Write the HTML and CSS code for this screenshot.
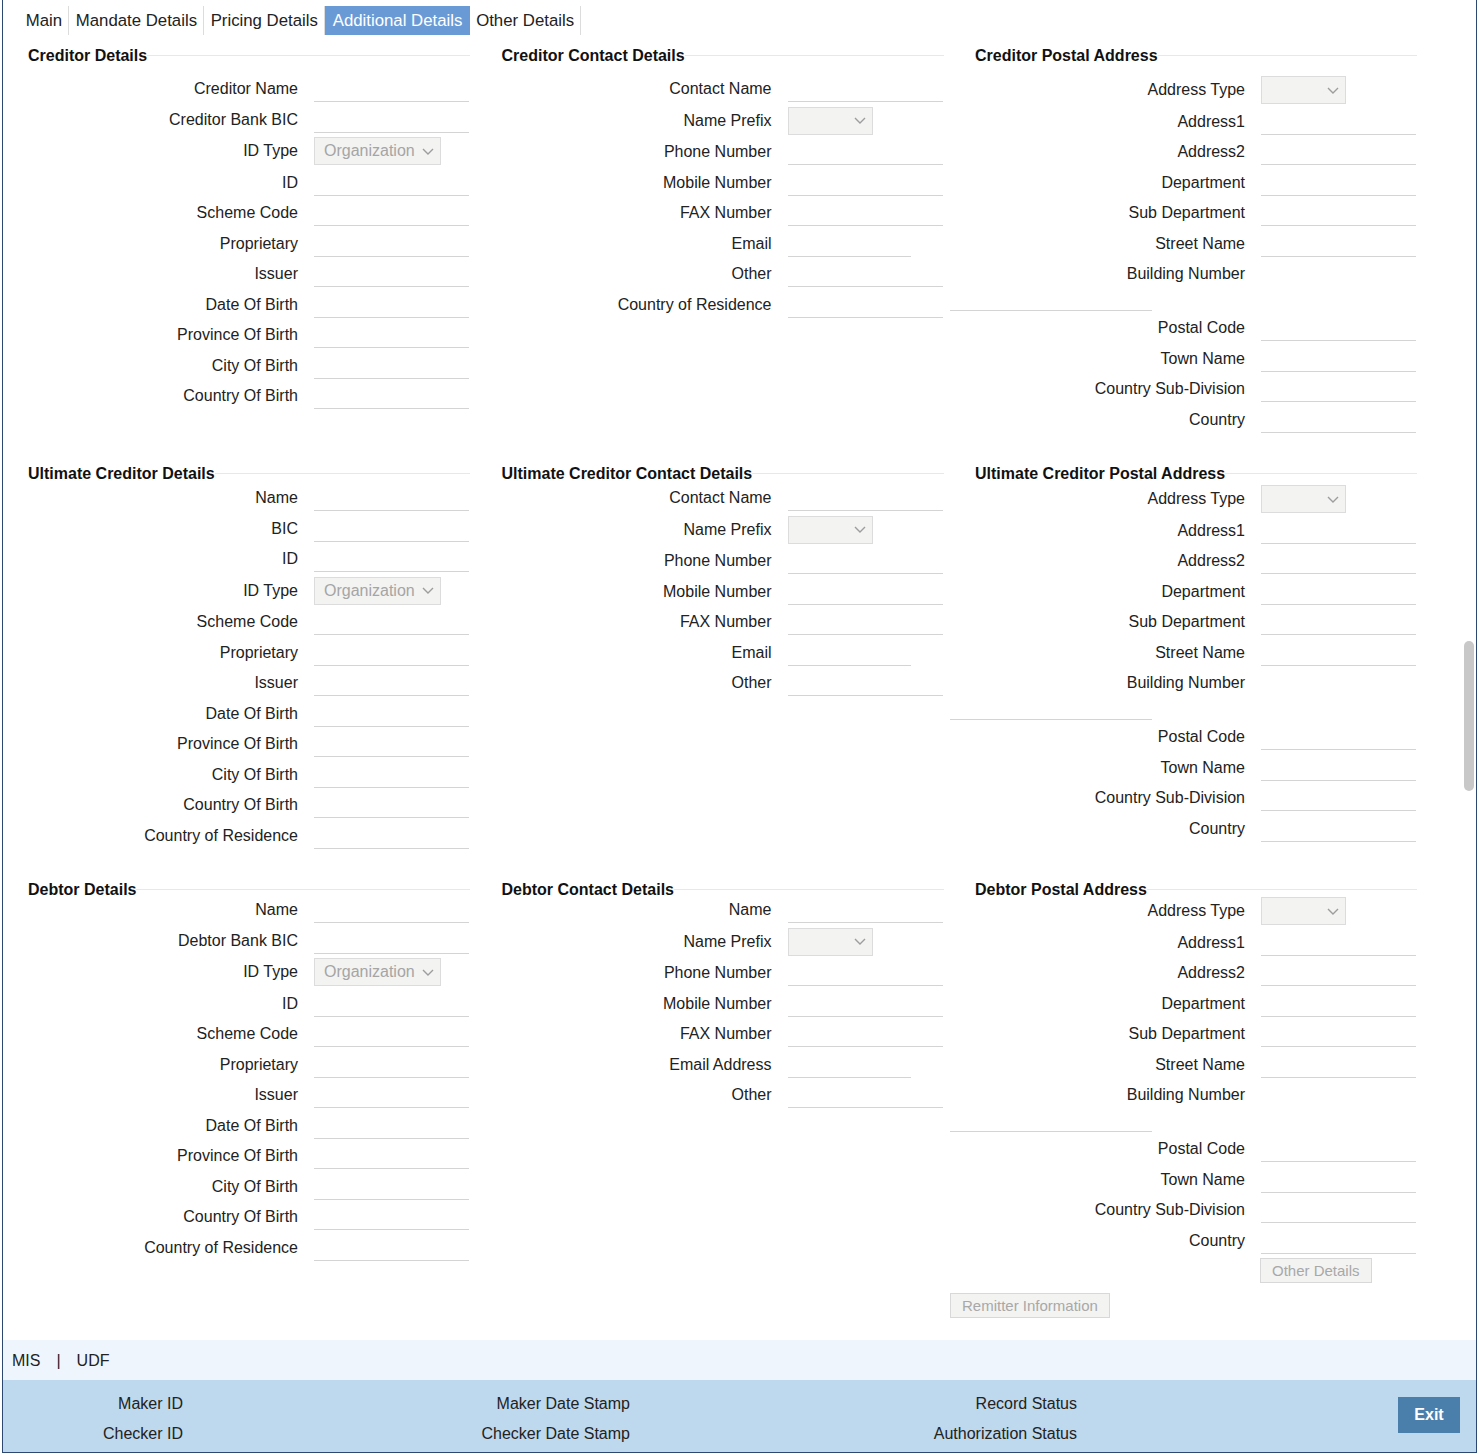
FILE: index.html
```html
<!DOCTYPE html>
<html lang="en">
<head>
  <meta charset="UTF-8" />
  <title>Additional Details</title>
  <link rel="stylesheet" href="styles.css">
</head>
<body>
  <div class="window">
    <ul class="tabs">
      <li>Main</li>
      <li>Mandate Details</li>
      <li>Pricing Details</li>
      <li class="active">Additional Details</li>
      <li>Other Details</li>
    </ul>

    <div class="content">
      <!-- creditor -->
      <div class="section first">
        <div class="col">
          <div class="col-head"><span>Creditor Details</span></div>
          <div class="row"><label>Creditor Name</label><input class="fld"></div>
          <div class="row"><label>Creditor Bank BIC</label><input class="fld"></div>
          <div class="row sel"><label>ID Type</label><div class="sel-box org"><span>Organization</span><svg width="12" height="7" viewBox="0 0 12 7"><path d="M1 1l5 5 5-5"/></svg></div></div>
          <div class="row"><label>ID</label><input class="fld"></div>
          <div class="row"><label>Scheme Code</label><input class="fld"></div>
          <div class="row"><label>Proprietary</label><input class="fld"></div>
          <div class="row"><label>Issuer</label><input class="fld"></div>
          <div class="row"><label>Date Of Birth</label><input class="fld"></div>
          <div class="row"><label>Province Of Birth</label><input class="fld"></div>
          <div class="row"><label>City Of Birth</label><input class="fld"></div>
          <div class="row"><label>Country Of Birth</label><input class="fld"></div>
        </div>
        <div class="col">
          <div class="col-head"><span>Creditor Contact Details</span></div>
          <div class="row"><label>Contact Name</label><input class="fld"></div>
          <div class="row sel"><label>Name Prefix</label><div class="sel-box"><span></span><svg width="12" height="7" viewBox="0 0 12 7"><path d="M1 1l5 5 5-5"/></svg></div></div>
          <div class="row"><label>Phone Number</label><input class="fld"></div>
          <div class="row"><label>Mobile Number</label><input class="fld"></div>
          <div class="row"><label>FAX Number</label><input class="fld"></div>
          <div class="row"><label>Email</label><input class="fld short"></div>
          <div class="row"><label>Other</label><input class="fld"></div>
          <div class="row"><label>Country of Residence</label><input class="fld"></div>
        </div>
        <div class="col">
          <div class="col-head"><span>Creditor Postal Address</span></div>
          <div class="row sel"><label>Address Type</label><div class="sel-box"><span></span><svg width="12" height="7" viewBox="0 0 12 7"><path d="M1 1l5 5 5-5"/></svg></div></div>
          <div class="row"><label>Address1</label><input class="fld"></div>
          <div class="row"><label>Address2</label><input class="fld"></div>
          <div class="row"><label>Department</label><input class="fld"></div>
          <div class="row"><label>Sub Department</label><input class="fld"></div>
          <div class="row"><label>Street Name</label><input class="fld"></div>
          <div class="row"><label>Building Number</label></div>
          <div class="row wrap"><input class="fld wide"></div>
          <div class="row"><label>Postal Code</label><input class="fld"></div>
          <div class="row"><label>Town Name</label><input class="fld"></div>
          <div class="row"><label>Country Sub-Division</label><input class="fld"></div>
          <div class="row"><label>Country</label><input class="fld"></div>
        </div>
      </div>

      <!-- ultimate creditor -->
      <div class="section second">
        <div class="col">
          <div class="col-head"><span>Ultimate Creditor Details</span></div>
          <div class="row"><label>Name</label><input class="fld"></div>
          <div class="row"><label>BIC</label><input class="fld"></div>
          <div class="row"><label>ID</label><input class="fld"></div>
          <div class="row sel"><label>ID Type</label><div class="sel-box org"><span>Organization</span><svg width="12" height="7" viewBox="0 0 12 7"><path d="M1 1l5 5 5-5"/></svg></div></div>
          <div class="row"><label>Scheme Code</label><input class="fld"></div>
          <div class="row"><label>Proprietary</label><input class="fld"></div>
          <div class="row"><label>Issuer</label><input class="fld"></div>
          <div class="row"><label>Date Of Birth</label><input class="fld"></div>
          <div class="row"><label>Province Of Birth</label><input class="fld"></div>
          <div class="row"><label>City Of Birth</label><input class="fld"></div>
          <div class="row"><label>Country Of Birth</label><input class="fld"></div>
          <div class="row"><label>Country of Residence</label><input class="fld"></div>
        </div>
        <div class="col">
          <div class="col-head"><span>Ultimate Creditor Contact Details</span></div>
          <div class="row"><label>Contact Name</label><input class="fld"></div>
          <div class="row sel"><label>Name Prefix</label><div class="sel-box"><span></span><svg width="12" height="7" viewBox="0 0 12 7"><path d="M1 1l5 5 5-5"/></svg></div></div>
          <div class="row"><label>Phone Number</label><input class="fld"></div>
          <div class="row"><label>Mobile Number</label><input class="fld"></div>
          <div class="row"><label>FAX Number</label><input class="fld"></div>
          <div class="row"><label>Email</label><input class="fld short"></div>
          <div class="row"><label>Other</label><input class="fld"></div>
        </div>
        <div class="col">
          <div class="col-head"><span>Ultimate Creditor Postal Address</span></div>
          <div class="row sel"><label>Address Type</label><div class="sel-box"><span></span><svg width="12" height="7" viewBox="0 0 12 7"><path d="M1 1l5 5 5-5"/></svg></div></div>
          <div class="row"><label>Address1</label><input class="fld"></div>
          <div class="row"><label>Address2</label><input class="fld"></div>
          <div class="row"><label>Department</label><input class="fld"></div>
          <div class="row"><label>Sub Department</label><input class="fld"></div>
          <div class="row"><label>Street Name</label><input class="fld"></div>
          <div class="row"><label>Building Number</label></div>
          <div class="row wrap"><input class="fld wide"></div>
          <div class="row"><label>Postal Code</label><input class="fld"></div>
          <div class="row"><label>Town Name</label><input class="fld"></div>
          <div class="row"><label>Country Sub-Division</label><input class="fld"></div>
          <div class="row"><label>Country</label><input class="fld"></div>
        </div>
      </div>

      <!-- debtor -->
      <div class="section third">
        <div class="col">
          <div class="col-head"><span>Debtor Details</span></div>
          <div class="row"><label>Name</label><input class="fld"></div>
          <div class="row"><label>Debtor Bank BIC</label><input class="fld"></div>
          <div class="row sel"><label>ID Type</label><div class="sel-box org"><span>Organization</span><svg width="12" height="7" viewBox="0 0 12 7"><path d="M1 1l5 5 5-5"/></svg></div></div>
          <div class="row"><label>ID</label><input class="fld"></div>
          <div class="row"><label>Scheme Code</label><input class="fld"></div>
          <div class="row"><label>Proprietary</label><input class="fld"></div>
          <div class="row"><label>Issuer</label><input class="fld"></div>
          <div class="row"><label>Date Of Birth</label><input class="fld"></div>
          <div class="row"><label>Province Of Birth</label><input class="fld"></div>
          <div class="row"><label>City Of Birth</label><input class="fld"></div>
          <div class="row"><label>Country Of Birth</label><input class="fld"></div>
          <div class="row"><label>Country of Residence</label><input class="fld"></div>
        </div>
        <div class="col">
          <div class="col-head"><span>Debtor Contact Details</span></div>
          <div class="row"><label>Name</label><input class="fld"></div>
          <div class="row sel"><label>Name Prefix</label><div class="sel-box"><span></span><svg width="12" height="7" viewBox="0 0 12 7"><path d="M1 1l5 5 5-5"/></svg></div></div>
          <div class="row"><label>Phone Number</label><input class="fld"></div>
          <div class="row"><label>Mobile Number</label><input class="fld"></div>
          <div class="row"><label>FAX Number</label><input class="fld"></div>
          <div class="row"><label>Email Address</label><input class="fld short"></div>
          <div class="row"><label>Other</label><input class="fld"></div>
        </div>
        <div class="col">
          <div class="col-head"><span>Debtor Postal Address</span></div>
          <div class="row sel"><label>Address Type</label><div class="sel-box"><span></span><svg width="12" height="7" viewBox="0 0 12 7"><path d="M1 1l5 5 5-5"/></svg></div></div>
          <div class="row"><label>Address1</label><input class="fld"></div>
          <div class="row"><label>Address2</label><input class="fld"></div>
          <div class="row"><label>Department</label><input class="fld"></div>
          <div class="row"><label>Sub Department</label><input class="fld"></div>
          <div class="row"><label>Street Name</label><input class="fld"></div>
          <div class="row"><label>Building Number</label></div>
          <div class="row wrap"><input class="fld wide"></div>
          <div class="row"><label>Postal Code</label><input class="fld"></div>
          <div class="row"><label>Town Name</label><input class="fld"></div>
          <div class="row"><label>Country Sub-Division</label><input class="fld"></div>
          <div class="row"><label>Country</label><input class="fld"></div>
          <div class="btn-row"><button class="btn" disabled>Other Details</button></div>
          <div class="btn-row remit"><button class="btn" disabled>Remitter Information</button></div>
        </div>
      </div>
    </div>

    <div class="mis">
      <span>MIS</span><span class="sep">|</span><span>UDF</span>
    </div>

    <div class="footer">
      <div class="stamps">
        <span>Maker ID</span>
        <span>Maker Date Stamp</span>
        <span>Record Status</span>
        <span>Checker ID</span>
        <span>Checker Date Stamp</span>
        <span>Authorization Status</span>
      </div>
      <button class="exit">Exit</button>
    </div>

    <div class="scroll-thumb"></div>
  </div>
</body>
</html>
```

FILE: styles.css
```css
body {
  margin: 0;
  font-family: "Liberation Sans", Arial, sans-serif;
  font-size: 16px;
  color: #222;
  background: #fff;
}
.window {
  position: relative;
  margin-left: 2px;
  width: 1475px;
  height: 1453px;
  box-sizing: border-box;
  border: 1px solid #2c4770;
  border-top: none;
  display: flex;
  flex-direction: column;
}
.tabs {
  list-style: none;
  margin: 6px 0 0 16.5px;
  padding: 0;
  display: flex;
  height: 29px;
  font-size: 16.8px;
}
.tabs li {
  padding: 0 6.3px;
  line-height: 29px;
  border-right: 1px solid #dcdcdc;
  white-space: nowrap;
}
.tabs li.active {
  background: #6a9ad6;
  color: #fff;
  padding: 0 6.5px 0 7.5px;
  border-right-color: #6a9ad6;
}
.content {
  flex: 1;
}
.section {
  display: grid;
  grid-template-columns: repeat(3, 442px);
  column-gap: 31.5px;
  padding-left: 25px;
  margin-top: 27px;
  align-items: start;
}
.section.first {
  margin-top: 11px;
}
.col-head {
  display: flex;
  align-items: center;
  height: 20px;
  font-weight: bold;
  color: #111;
  white-space: nowrap;
}
.col-head::after {
  content: "";
  flex: 1;
  height: 1px;
  margin-top: -2px;
  background: #e8e8e8;
}
.first .col-head { margin-bottom: 10px; }
.second .col-head { margin-bottom: 1px; }
.third .col-head { margin-bottom: -3px; }
.row {
  display: flex;
  align-items: flex-start;
  height: 26px;
  margin-bottom: 4.5px;
}
.row label {
  width: 270px;
  margin-right: 16px;
  text-align: right;
  line-height: 26px;
  white-space: nowrap;
}
.row.sel {
  height: 28px;
}
.row.sel label {
  line-height: 28px;
}
.fld {
  width: 155px;
  height: 26px;
  box-sizing: border-box;
  border: none;
  border-bottom: 1px solid #d4d4d4;
  background: transparent;
  padding: 0;
  margin: 0;
}
.fld.short {
  width: 123px;
}
.row.wrap {
  height: 19px;
  margin-left: -25px;
}
.fld.wide {
  width: 202px;
  height: 19px;
}
.sel-box {
  width: 85px;
  height: 28px;
  box-sizing: border-box;
  border: 1px solid #dcdcdc;
  background: #f3f3f2;
  display: flex;
  align-items: center;
  justify-content: space-between;
  padding: 0 6px 0 9px;
  color: #a5a5a5;
}
.sel-box.org {
  width: 127px;
}
.sel-box svg path {
  fill: none;
  stroke: #9d9d9d;
  stroke-width: 1.4;
}
.btn-row {
  padding-left: 285px;
}
.btn-row.remit {
  padding-left: 0;
  margin: 10px 0 0 -25px;
}
.btn {
  height: 25px;
  padding: 0 11px;
  font-family: inherit;
  font-size: 15px;
  color: #a8a8a8;
  background: #f3f3f2;
  border: 1px solid #d8d8d8;
  border-radius: 0;
}
.mis {
  height: 40px;
  box-sizing: border-box;
  padding: 1px 0 0 9px;
  line-height: 39px;
  background: #eef5fd;
}
.mis .sep {
  margin: 0 16px;
}
.footer {
  height: 72px;
  background: #bed8ed;
  display: flex;
  align-items: flex-start;
}
.stamps {
  display: grid;
  grid-template-columns: repeat(3, 447px);
  row-gap: 6px;
  padding-top: 12px;
}
.stamps span {
  width: 180px;
  text-align: right;
  line-height: 24px;
  white-space: nowrap;
}
.exit {
  margin: 17px 16px 0 auto;
  width: 62px;
  height: 36px;
  border: none;
  background: #4a7fab;
  color: #fff;
  font-family: inherit;
  font-size: 16px;
  font-weight: bold;
}
.scroll-thumb {
  position: absolute;
  left: 1461px;
  top: 641px;
  width: 10px;
  height: 150px;
  border-radius: 5px;
  background: #c8c8c8;
}
```
